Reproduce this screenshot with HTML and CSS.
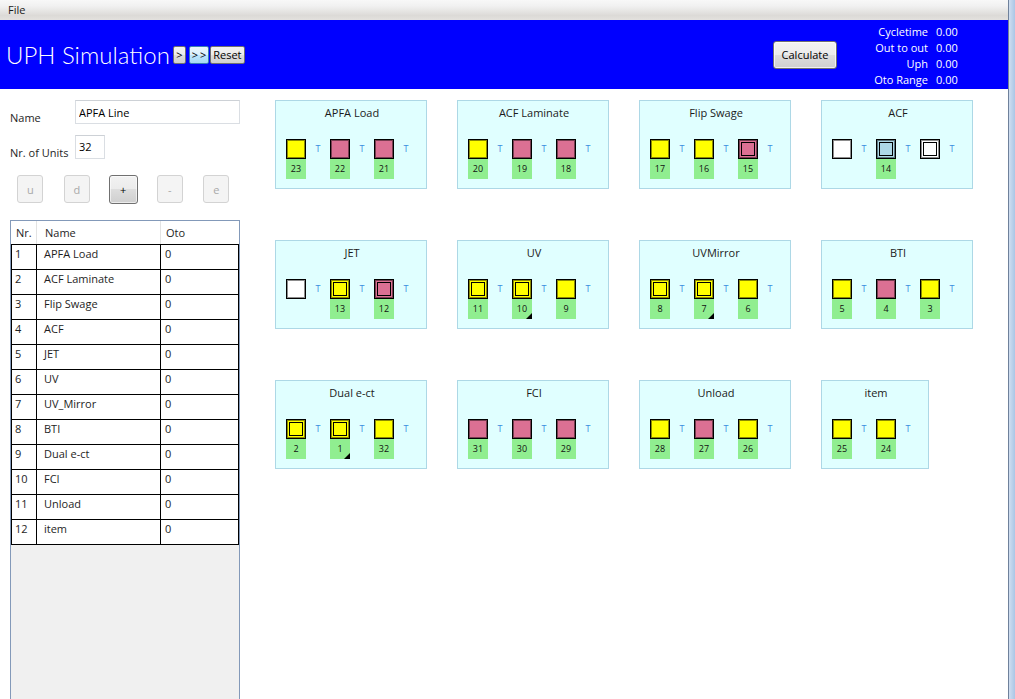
FILE: index.html
```html
<!DOCTYPE html>
<html lang="en">
<head>
<meta charset="utf-8">
<title>UPH Simulation</title>
<link rel="stylesheet" href="styles.css">
</head>
<body>
<div class="window">
  <div class="app">
    <nav class="menubar"><span class="menu-item">File</span></nav>
    <header class="header">
      <h1 class="title">UPH Simulation</h1>
      <button class="hbtn step">&gt;</button>
      <button class="hbtn run">&gt;&gt;</button>
      <button class="hbtn reset">Reset</button>
      <div class="spacer"></div>
      <button class="calc">Calculate</button>
      <div class="stats">
        <span class="stat-label">Cycletime</span><span class="stat-value">0.00</span>
        <span class="stat-label">Out to out</span><span class="stat-value">0.00</span>
        <span class="stat-label">Uph</span><span class="stat-value">0.00</span>
        <span class="stat-label">Oto Range</span><span class="stat-value">0.00</span>
      </div>
    </header>
    <div class="content">
      <aside class="left">
        <div class="field">
          <label class="field-label">Name</label>
          <input class="textbox name-input" value="APFA Line">
        </div>
        <div class="field">
          <label class="field-label">Nr. of Units</label>
          <input class="textbox units-input" value="32">
        </div>
        <div class="tools">
          <button class="tool" disabled>u</button>
          <button class="tool" disabled>d</button>
          <button class="tool primary">+</button>
          <button class="tool" disabled>-</button>
          <button class="tool" disabled>e</button>
        </div>
        <div class="datagrid">
          <div class="dg-head"><span class="c1">Nr.</span><span class="c2">Name</span><span class="c3">Oto</span></div>
          <div class="dg-body">
            <div class="dg-row"><span class="c1">1</span><span class="c2">APFA Load</span><span class="c3">0</span></div>
            <div class="dg-row"><span class="c1">2</span><span class="c2">ACF Laminate</span><span class="c3">0</span></div>
            <div class="dg-row"><span class="c1">3</span><span class="c2">Flip Swage</span><span class="c3">0</span></div>
            <div class="dg-row"><span class="c1">4</span><span class="c2">ACF</span><span class="c3">0</span></div>
            <div class="dg-row"><span class="c1">5</span><span class="c2">JET</span><span class="c3">0</span></div>
            <div class="dg-row"><span class="c1">6</span><span class="c2">UV</span><span class="c3">0</span></div>
            <div class="dg-row"><span class="c1">7</span><span class="c2">UV_Mirror</span><span class="c3">0</span></div>
            <div class="dg-row"><span class="c1">8</span><span class="c2">BTI</span><span class="c3">0</span></div>
            <div class="dg-row"><span class="c1">9</span><span class="c2">Dual e-ct</span><span class="c3">0</span></div>
            <div class="dg-row"><span class="c1">10</span><span class="c2">FCI</span><span class="c3">0</span></div>
            <div class="dg-row"><span class="c1">11</span><span class="c2">Unload</span><span class="c3">0</span></div>
            <div class="dg-row"><span class="c1">12</span><span class="c2">item</span><span class="c3">0</span></div>
          </div>
        </div>
      </aside>
      <main class="main">
        <div class="grid">
          <section class="card">
            <div class="card-title">APFA Load</div>
            <div class="items">
              <div class="item"><div class="unit"><div class="sq yellow"></div><div class="num">23</div></div><span class="t">T</span></div>
              <div class="item"><div class="unit"><div class="sq pink"></div><div class="num">22</div></div><span class="t">T</span></div>
              <div class="item"><div class="unit"><div class="sq pink"></div><div class="num">21</div></div><span class="t">T</span></div>
            </div>
          </section>
          <section class="card">
            <div class="card-title">ACF Laminate</div>
            <div class="items">
              <div class="item"><div class="unit"><div class="sq yellow"></div><div class="num">20</div></div><span class="t">T</span></div>
              <div class="item"><div class="unit"><div class="sq pink"></div><div class="num">19</div></div><span class="t">T</span></div>
              <div class="item"><div class="unit"><div class="sq pink"></div><div class="num">18</div></div><span class="t">T</span></div>
            </div>
          </section>
          <section class="card">
            <div class="card-title">Flip Swage</div>
            <div class="items">
              <div class="item"><div class="unit"><div class="sq yellow"></div><div class="num">17</div></div><span class="t">T</span></div>
              <div class="item"><div class="unit"><div class="sq yellow"></div><div class="num">16</div></div><span class="t">T</span></div>
              <div class="item"><div class="unit"><div class="sq pink"><div class="sq-inner"></div></div><div class="num">15</div></div><span class="t">T</span></div>
            </div>
          </section>
          <section class="card">
            <div class="card-title">ACF</div>
            <div class="items">
              <div class="item"><div class="unit"><div class="sq white"></div><div class="num empty"></div></div><span class="t">T</span></div>
              <div class="item"><div class="unit"><div class="sq blue"><div class="sq-inner"></div></div><div class="num">14</div></div><span class="t">T</span></div>
              <div class="item"><div class="unit"><div class="sq white"><div class="sq-inner"></div></div><div class="num empty"></div></div><span class="t">T</span></div>
            </div>
          </section>

          <section class="card">
            <div class="card-title">JET</div>
            <div class="items">
              <div class="item"><div class="unit"><div class="sq white"></div><div class="num empty"></div></div><span class="t">T</span></div>
              <div class="item"><div class="unit"><div class="sq yellow"><div class="sq-inner"></div></div><div class="num">13</div></div><span class="t">T</span></div>
              <div class="item"><div class="unit"><div class="sq pink"><div class="sq-inner"></div></div><div class="num">12</div></div><span class="t">T</span></div>
            </div>
          </section>
          <section class="card">
            <div class="card-title">UV</div>
            <div class="items">
              <div class="item"><div class="unit"><div class="sq yellow"><div class="sq-inner"></div></div><div class="num">11</div></div><span class="t">T</span></div>
              <div class="item"><div class="unit"><div class="sq yellow"><div class="sq-inner"></div></div><div class="num marked">10</div></div><span class="t">T</span></div>
              <div class="item"><div class="unit"><div class="sq yellow"></div><div class="num">9</div></div><span class="t">T</span></div>
            </div>
          </section>
          <section class="card">
            <div class="card-title">UVMirror</div>
            <div class="items">
              <div class="item"><div class="unit"><div class="sq yellow"><div class="sq-inner"></div></div><div class="num">8</div></div><span class="t">T</span></div>
              <div class="item"><div class="unit"><div class="sq yellow"><div class="sq-inner"></div></div><div class="num marked">7</div></div><span class="t">T</span></div>
              <div class="item"><div class="unit"><div class="sq yellow"></div><div class="num">6</div></div><span class="t">T</span></div>
            </div>
          </section>
          <section class="card">
            <div class="card-title">BTI</div>
            <div class="items">
              <div class="item"><div class="unit"><div class="sq yellow"></div><div class="num">5</div></div><span class="t">T</span></div>
              <div class="item"><div class="unit"><div class="sq pink"></div><div class="num">4</div></div><span class="t">T</span></div>
              <div class="item"><div class="unit"><div class="sq yellow"></div><div class="num">3</div></div><span class="t">T</span></div>
            </div>
          </section>

          <section class="card">
            <div class="card-title">Dual e-ct</div>
            <div class="items">
              <div class="item"><div class="unit"><div class="sq yellow"><div class="sq-inner"></div></div><div class="num">2</div></div><span class="t">T</span></div>
              <div class="item"><div class="unit"><div class="sq yellow"><div class="sq-inner"></div></div><div class="num marked">1</div></div><span class="t">T</span></div>
              <div class="item"><div class="unit"><div class="sq yellow"></div><div class="num">32</div></div><span class="t">T</span></div>
            </div>
          </section>
          <section class="card">
            <div class="card-title">FCI</div>
            <div class="items">
              <div class="item"><div class="unit"><div class="sq pink"></div><div class="num">31</div></div><span class="t">T</span></div>
              <div class="item"><div class="unit"><div class="sq pink"></div><div class="num">30</div></div><span class="t">T</span></div>
              <div class="item"><div class="unit"><div class="sq pink"></div><div class="num">29</div></div><span class="t">T</span></div>
            </div>
          </section>
          <section class="card">
            <div class="card-title">Unload</div>
            <div class="items">
              <div class="item"><div class="unit"><div class="sq yellow"></div><div class="num">28</div></div><span class="t">T</span></div>
              <div class="item"><div class="unit"><div class="sq pink"></div><div class="num">27</div></div><span class="t">T</span></div>
              <div class="item"><div class="unit"><div class="sq yellow"></div><div class="num">26</div></div><span class="t">T</span></div>
            </div>
          </section>
          <section class="card">
            <div class="card-title">item</div>
            <div class="items">
              <div class="item"><div class="unit"><div class="sq yellow"></div><div class="num">25</div></div><span class="t">T</span></div>
              <div class="item"><div class="unit"><div class="sq yellow"></div><div class="num">24</div></div><span class="t">T</span></div>
            </div>
          </section>
        </div>
      </main>
    </div>
  </div>
  <div class="frame"></div>
</div>
</body>
</html>
```
FILE: styles.css
```css
html, body {
  margin: 0;
  padding: 0;
}
body {
  font-family: "Open Sans", "Liberation Sans", sans-serif;
  font-size: 11px;
  color: #1e1e1e;
  background: #ffffff;
  overflow: hidden;
}
.window {
  display: flex;
  width: 1015px;
  height: 699px;
}
.app {
  flex: 1;
  min-width: 0;
  display: flex;
  flex-direction: column;
}
.frame {
  width: 7px;
  flex: none;
  background: linear-gradient(to right, #6f819b 0, #6f819b 1px, #d0def0 1px, #aac6e6 100%);
}

/* menu */
.menubar {
  height: 20px;
  flex: none;
  display: flex;
  align-items: center;
  padding-left: 8px;
  background: linear-gradient(to bottom, #f8f8f8 0%, #f1f1f1 30%, #dcdad7 78%, #e3e1de 100%);
}
.menu-item {
  line-height: 16px;
  color: #1a1a1a;
}

/* header */
.header {
  height: 69px;
  flex: none;
  display: flex;
  align-items: center;
  padding-left: 6px;
  background: #0000ff;
  color: #ffffff;
}
.title {
  margin: 0;
  font-family: Lato, "Open Sans", sans-serif;
  font-weight: 300;
  font-size: 24px;
  line-height: 29px;
  color: #ffffff;
  white-space: nowrap;
}
.hbtn {
  font-family: inherit;
  font-size: 11px;
  height: 18px;
  padding: 0;
  margin: 0;
  line-height: 15px;
  color: #000;
  border: 1px solid #707070;
  border-radius: 2px;
  background: linear-gradient(to bottom, #f2f2f2 0%, #ebebeb 50%, #dddddd 50%, #cfcfcf 100%);
}
.step {
  width: 13px;
  margin-left: 3px;
}
.run {
  width: 20px;
  margin-left: 3px;
  letter-spacing: 2px;
  text-indent: 2px;
  border-color: #3c7fb1;
  background: linear-gradient(to bottom, #eaf6fd 0%, #d9f0fc 50%, #bee6fd 50%, #a7d9f5 100%);
}
.reset {
  width: 35px;
  margin-left: 1px;
}
.spacer {
  flex: 1;
}
.calc {
  width: 64px;
  height: 28px;
  margin: 0 34px 0 0;
  padding: 0;
  font-family: inherit;
  font-size: 11px;
  color: #000;
  border: 1px solid #707070;
  border-radius: 3px;
  background: linear-gradient(to bottom, #f2f2f2 0%, #ebebeb 50%, #dddddd 50%, #cfcfcf 100%);
  box-shadow: inset 0 0 0 1px rgba(255, 255, 255, 0.7);
}
.stats {
  align-self: flex-start;
  margin: 4px 50px 0 0;
  display: grid;
  grid-template-columns: 57px 22px;
  column-gap: 8px;
  line-height: 16px;
  white-space: nowrap;
}
.stat-label {
  text-align: right;
}

/* content */
.content {
  flex: 1;
  min-height: 0;
  display: flex;
}
.left {
  width: 250px;
  flex: none;
  display: flex;
  flex-direction: column;
  padding-top: 11px;
  box-sizing: border-box;
}
.field {
  display: flex;
  align-items: flex-start;
  height: 24px;
  padding-left: 10px;
}
.field + .field {
  margin-top: 11px;
}
.field-label {
  width: 65px;
  flex: none;
  margin-top: 10px;
  line-height: 16px;
  white-space: nowrap;
}
.textbox {
  font-family: inherit;
  font-size: 11px;
  color: #000;
  height: 24px;
  margin: 0;
  box-sizing: border-box;
  border: 1px solid #dadee3;
  border-top-color: #cdd1d6;
  background: #fff;
  outline: none;
}
.name-input {
  width: 165px;
  padding: 0 3px;
}
.units-input {
  width: 30px;
  padding: 2px 3px 4px;
}
.tools {
  display: grid;
  grid-template-columns: repeat(5, 46.5px);
  justify-items: center;
  align-items: start;
  padding-left: 7px;
  margin-top: 16px;
}
.tool {
  width: 26px;
  height: 28px;
  margin: 0;
  padding: 0;
  font-family: inherit;
  font-size: 11px;
  color: #a9a9a9;
  border: 1px solid #d3d3d3;
  border-radius: 3px;
  background: #f4f4f4;
}
.tool.primary {
  width: 29px;
  height: 29px;
  color: #000;
  border-color: #707070;
  background: linear-gradient(to bottom, #f2f2f2 0%, #ebebeb 50%, #dddddd 50%, #cfcfcf 100%);
  box-shadow: inset 0 0 0 1px rgba(255, 255, 255, 0.6);
}

/* data grid */
.datagrid {
  flex: 1;
  width: 230px;
  margin: 16px 0 0 10px;
  box-sizing: border-box;
  border: 1px solid #8399b9;
  border-bottom: 0;
  background: #f0f0f0;
}
.dg-head {
  display: grid;
  grid-template-columns: 26px 124px 78px;
  height: 23px;
  background: #ffffff;
}
.dg-head span {
  display: flex;
  align-items: center;
  box-sizing: border-box;
  border-right: 1px solid #e3e3e3;
  white-space: nowrap;
}
.dg-head .c1 { padding-left: 5px; }
.dg-head .c2 { padding-left: 8px; }
.dg-head .c3 { padding-left: 5px; border-right: 0; }
.dg-body {
  width: 228px;
  box-sizing: border-box;
  border-top: 1px solid #000;
  border-left: 1px solid #000;
  background: #ffffff;
}
.dg-row {
  display: grid;
  grid-template-columns: 25px 124px 78px;
  height: 25px;
}
.dg-row span {
  box-sizing: border-box;
  border-right: 1px solid #000;
  border-bottom: 1px solid #000;
  padding-top: 1px;
  line-height: 16px;
  white-space: nowrap;
  overflow: hidden;
}
.dg-row .c1 { padding-left: 3px; }
.dg-row .c2 { padding-left: 7px; }
.dg-row .c3 { padding-left: 4px; }

/* stations */
.main {
  flex: 1;
  min-width: 0;
  padding: 11px 0 0 25px;
}
.grid {
  display: grid;
  grid-template-columns: repeat(4, 152px);
  column-gap: 30px;
  row-gap: 51px;
  justify-items: start;
  align-items: start;
}
.card {
  background: #e0ffff;
  border: 1px solid #add8e6;
  padding: 4px 8px 9px 10px;
}
.card-title {
  text-align: center;
  line-height: 16px;
  color: #1b1b1b;
  white-space: nowrap;
}
.items {
  display: flex;
  margin-top: 18px;
}
.item {
  display: flex;
  width: 44px;
}
.unit {
  width: 20px;
  flex: none;
}
.sq {
  width: 20px;
  height: 20px;
  box-sizing: border-box;
  border: 1px solid #000;
  box-shadow: inset 0 0 0 1px rgba(0, 0, 0, 0.45);
  display: flex;
  align-items: center;
  justify-content: center;
}
.sq-inner {
  width: 14px;
  height: 14px;
  box-sizing: border-box;
  border: 1px solid #000;
}
.yellow { background: #ffff00; }
.pink { background: #db7093; }
.white { background: #ffffff; }
.blue { background: #add8e6; }
.num {
  position: relative;
  height: 20px;
  background: #90ee90;
  text-align: center;
  font-size: 9px;
  line-height: 20px;
  color: #111;
}
.num.empty {
  background: transparent;
}
.num.marked::after {
  content: "";
  position: absolute;
  right: 0;
  bottom: 0;
  width: 0;
  height: 0;
  border-style: solid;
  border-width: 0 0 6px 6px;
  border-color: transparent transparent #000 transparent;
}
.t {
  width: 24px;
  height: 20px;
  text-align: center;
  font-size: 9px;
  line-height: 20px;
  color: #3b8ee0;
}
```
